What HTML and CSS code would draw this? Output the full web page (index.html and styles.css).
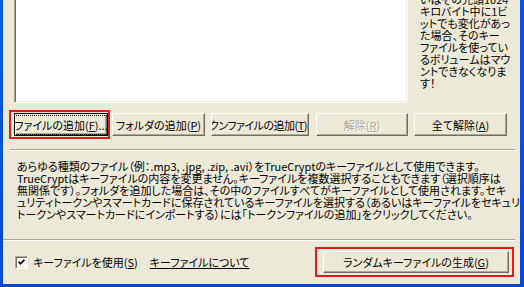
FILE: index.html
```html
<!DOCTYPE html>
<html lang="ja">
<head>
  <meta charset="UTF-8">
  <title>キーファイル</title>
  <link rel="stylesheet" href="styles.css">
</head>
<body>
  <div class="window">
    <div class="top">
      <div class="list"></div>
      <p class="note">いはその先頭1024<br>キロバイト中に1ビ<br>ットでも変化があっ<br>た場合、そのキー<br>ファイルを使ってい<br>るボリュームはマウ<br>ントできなくなりま<br>す！</p>
    </div>

    <div class="actions">
      <span class="mark mark-add">
        <button class="btn btn-add default"><span class="focus">ファイルの追加(<u>F</u>)...</span></button>
      </span>
      <button class="btn btn-folder">フォルダの追加(<u>P</u>)</button>
      <button class="btn btn-token">トークンファイルの追加(<u>T</u>)</button>
      <button class="btn btn-remove" disabled>解除(<u>R</u>)</button>
      <button class="btn btn-clear">全て解除(<u>A</u>)</button>
    </div>

    <hr class="sep sep-top">

    <p class="desc">あらゆる種類のファイル（例：.mp3, .jpg, .zip, .avi）をTrueCryptのキーファイルとして使用できます。<br>TrueCryptはキーファイルの内容を変更ません。キーファイルを複数選択することもできます（選択順序は<br>無関係です）。フォルダを追加した場合は、その中のファイルすべてがキーファイルとして使用されます。セキ<br>ュリティトークンやスマートカードに保存されているキーファイルを選択する（あるいはキーファイルをセキュリティ<br>トークンやスマートカードにインポートする）には「トークンファイルの追加」をクリックしてください。</p>

    <hr class="sep sep-bottom">

    <div class="bottom">
      <label class="check">
        <span class="box">
          <svg width="7" height="7" viewBox="0 0 7 7"><path d="M0.5 2.5 L2.5 4.8 L6.5 0.8" fill="none" stroke="#000" stroke-width="1.8"/></svg>
        </span>
        <span>キーファイルを使用(<u>S</u>)</span>
      </label>
      <a class="about" href="#">キーファイルについて</a>
      <span class="mark mark-gen">
        <button class="btn btn-gen">ランダムキーファイルの生成(<u>G</u>)</button>
      </span>
    </div>
  </div>
</body>
</html>
```

FILE: styles.css
```css
* {
  box-sizing: border-box;
}

body {
  margin: 0;
  height: 287px;
  overflow: hidden;
  background: linear-gradient(to bottom, #0b55e0, #0a46cf);
  font-family: "Noto Sans CJK JP", "Noto Sans", sans-serif;
  font-size: 11px;
  font-feature-settings: "palt";
  color: #000;
}

.window {
  height: 284px;
  margin: 0 4px 0 3px;
  background: #ece9d8;
  overflow: hidden;
}

.top {
  display: flex;
  height: 111px;
  margin-top: -8px;
  padding-left: 11px;
}

.list {
  width: 394px;
  height: 111px;
  background: #fff;
  border: 1px solid;
  border-color: #aca899 #fff #fff #aca899;
  box-shadow: inset 1px 1px 0 #716f64, inset -1px -1px 0 #f1efe2;
}

.note {
  margin: 0 0 0 12px;
  padding-top: 1px;
  line-height: 12px;
  white-space: nowrap;
}

.actions {
  display: flex;
  align-items: center;
  margin-top: 7px;
  padding-left: 6px;
}

.mark {
  display: flex;
  border: 2px solid #dc1d1d;
}

.mark-add {
  padding: 1px 0 1px 3px;
}

.btn {
  display: flex;
  align-items: center;
  justify-content: center;
  height: 23px;
  padding: 0;
  overflow: hidden;
  white-space: nowrap;
  font: inherit;
  color: #000;
  background: #ece9d8;
  border: 1px solid;
  border-color: #fff #716f64 #716f64 #fff;
  box-shadow: inset -1px -1px 0 #aca899;
}

.default {
  border: 1px solid #000;
  box-shadow: inset 1px 1px 0 #fff, inset -1px -1px 0 #716f64, inset -2px -2px 0 #aca899;
}

.focus {
  padding: 0 1px;
  outline: 1px dotted #000;
  outline-offset: 1px;
}

.btn-add {
  width: 94px;
}

.btn-folder {
  width: 93px;
  margin-left: 2px;
}

/* the label is wider than the button, keep the mnemonic visible */
.btn-token {
  width: 98px;
  margin-left: 6px;
  justify-content: flex-end;
  padding-right: 1px;
  letter-spacing: -0.5px;
}

.btn-remove {
  width: 92px;
  margin-left: 7px;
  color: #aca899;
  text-shadow: 1px 1px 0 #fff;
}

.btn-clear {
  width: 93px;
  margin-left: 6px;
}

.sep {
  height: 0;
  border: 0;
  border-top: 1px solid #aca899;
  border-bottom: 1px solid #fff;
}

.sep-top {
  margin: 10px 5px 0 7px;
}

.sep-bottom {
  margin: 19px 5px 0 0;
}

.desc {
  margin: 9px 0 0;
  padding-left: 14px;
  line-height: 12px;
  white-space: nowrap;
}

.bottom {
  display: flex;
  align-items: center;
  margin-top: 6px;
  padding-left: 12px;
}

.check {
  display: flex;
  align-items: center;
  gap: 5px;
}

.box {
  display: flex;
  align-items: center;
  justify-content: center;
  width: 13px;
  height: 13px;
  background: #fff;
  border: 1px solid;
  border-color: #aca899 #fff #fff #aca899;
  box-shadow: inset 1px 1px 0 #716f64, inset -1px -1px 0 #f1efe2;
}

.about {
  margin-left: 12px;
  color: #000;
  text-decoration: underline;
}

.mark-gen {
  margin: 0 6px 0 auto;
  padding: 2px 3px 2px 6px;
}

.btn-gen {
  width: 186px;
  height: 22px;
}
```
